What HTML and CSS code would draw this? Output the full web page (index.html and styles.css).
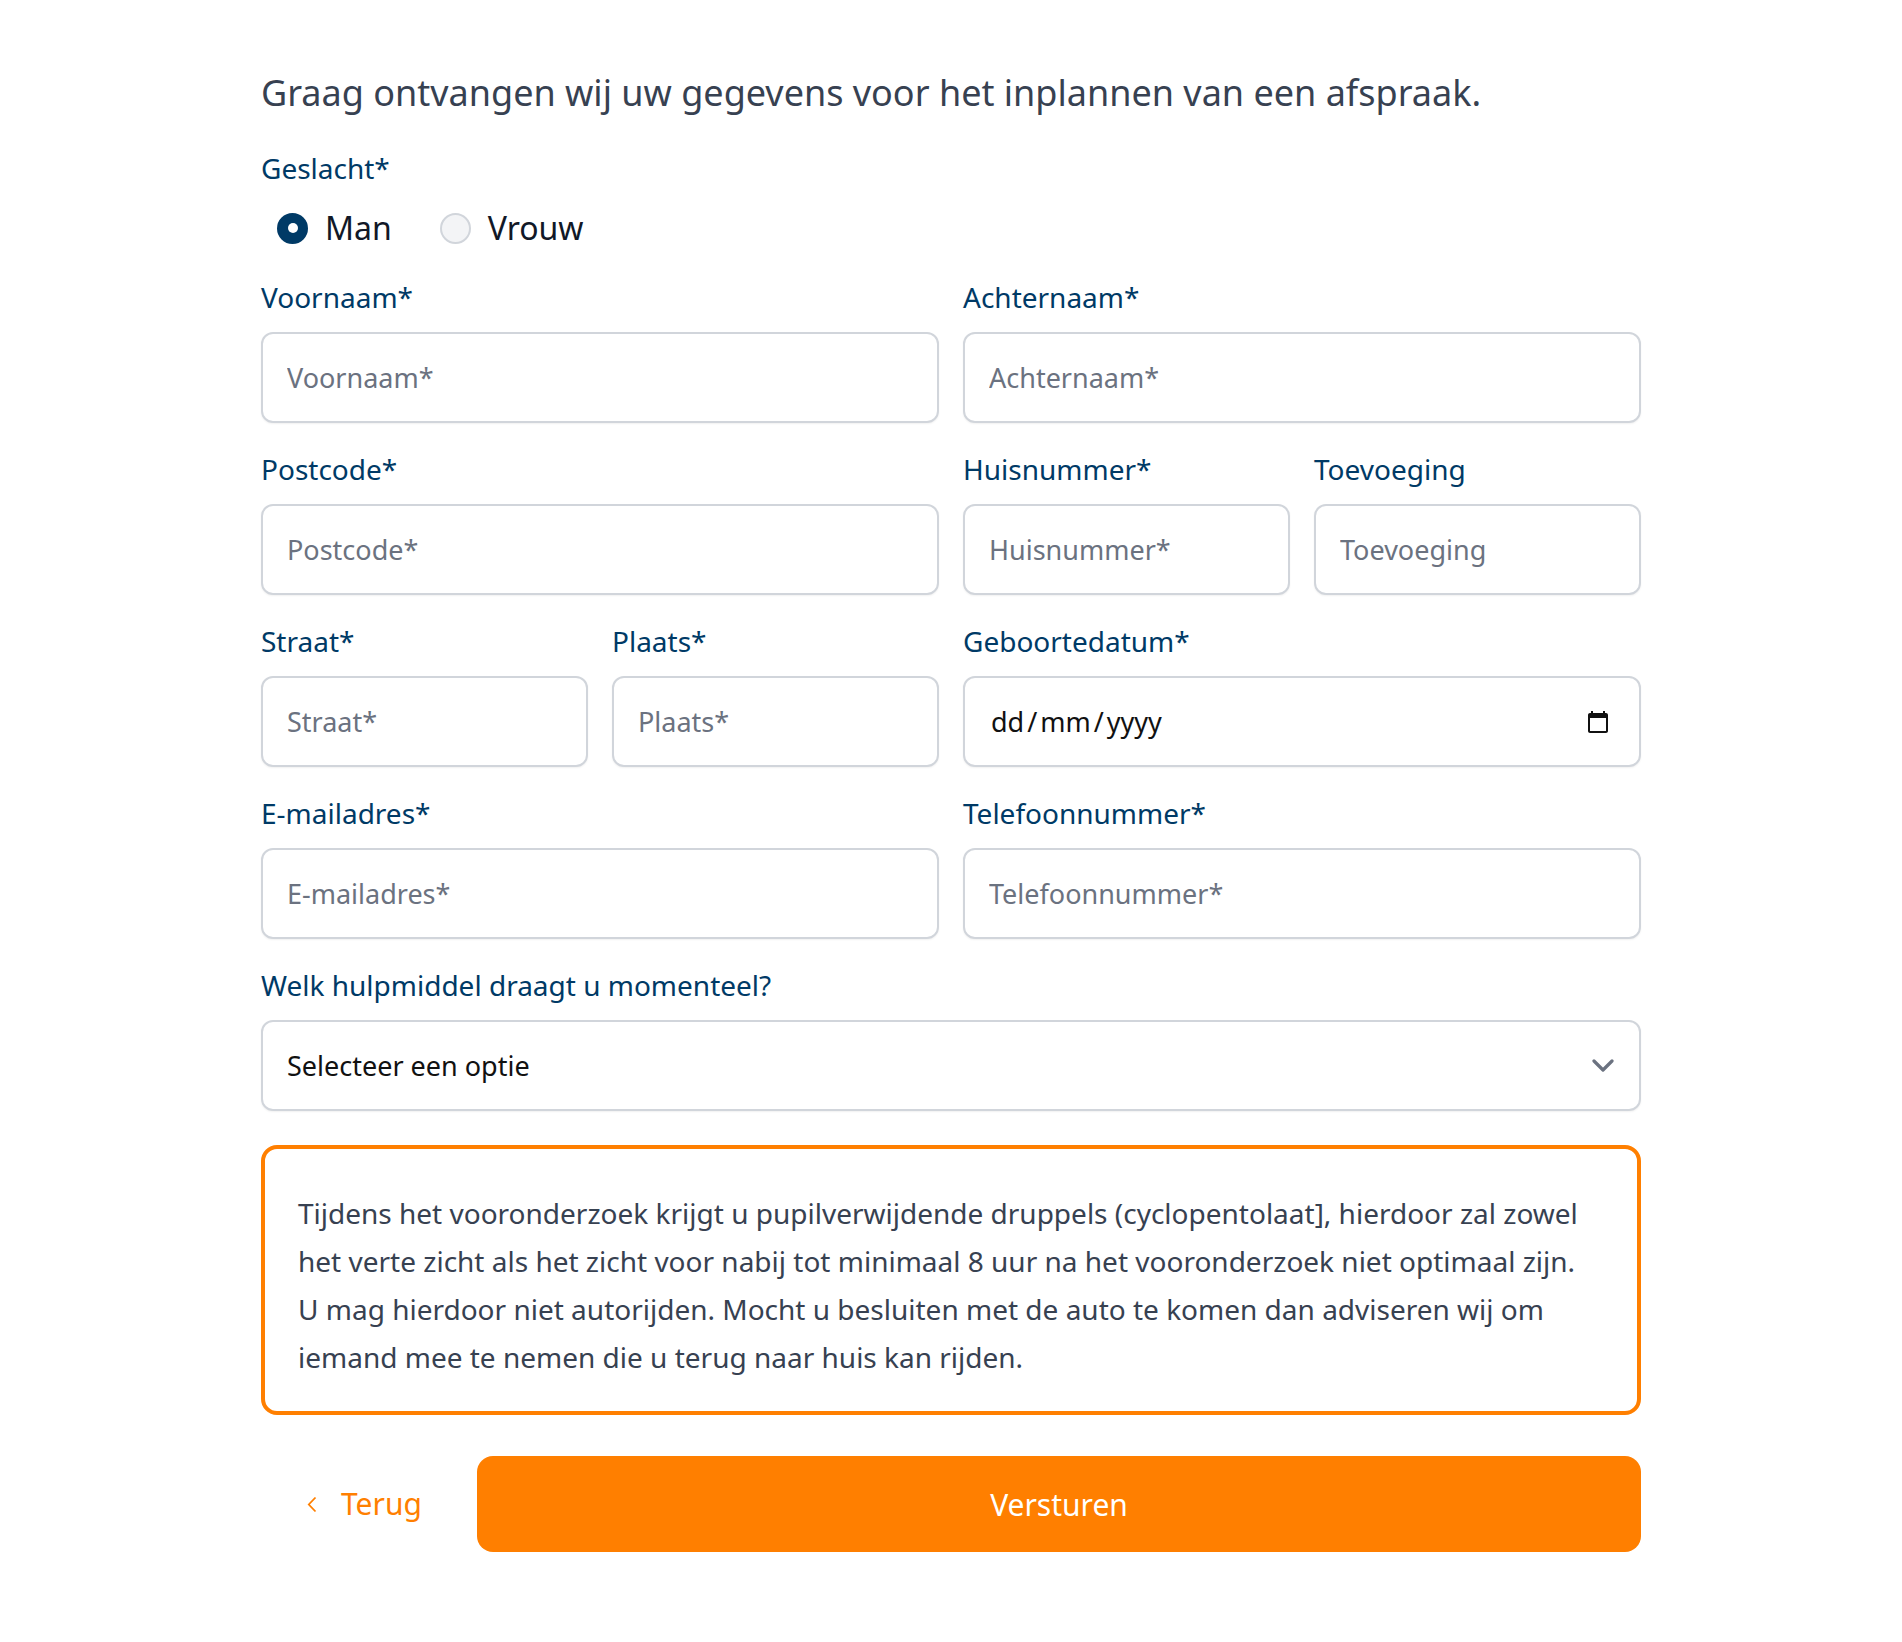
FILE: index.html
```html
<!DOCTYPE html>
<html lang="nl">
<head>
<meta charset="utf-8">
<title>Afspraak</title>
<link rel="stylesheet" href="styles.css">
</head>
<body>
<main class="page">
  <h1 class="intro">Graag ontvangen wij uw gegevens voor het inplannen van een afspraak.</h1>

  <div class="gender">
    <div class="label">Geslacht*</div>
    <div class="radios">
      <label class="radio"><span class="dot checked"></span><span>Man</span></label>
      <label class="radio"><span class="dot"></span><span>Vrouw</span></label>
    </div>
  </div>

  <div class="grid">
    <div class="field span2">
      <div class="label">Voornaam*</div>
      <input class="input" type="text" placeholder="Voornaam*">
    </div>
    <div class="field span2">
      <div class="label">Achternaam*</div>
      <input class="input" type="text" placeholder="Achternaam*">
    </div>

    <div class="field span2">
      <div class="label">Postcode*</div>
      <input class="input" type="text" placeholder="Postcode*">
    </div>
    <div class="field">
      <div class="label">Huisnummer*</div>
      <input class="input" type="text" placeholder="Huisnummer*">
    </div>
    <div class="field">
      <div class="label">Toevoeging</div>
      <input class="input" type="text" placeholder="Toevoeging">
    </div>

    <div class="field">
      <div class="label">Straat*</div>
      <input class="input" type="text" placeholder="Straat*">
    </div>
    <div class="field">
      <div class="label">Plaats*</div>
      <input class="input" type="text" placeholder="Plaats*">
    </div>
    <div class="field span2">
      <div class="label">Geboortedatum*</div>
      <div class="input date">
        <span class="date-text">dd<span class="sep">/</span>mm<span class="sep">/</span>yyyy</span>
        <svg class="cal" viewBox="0 0 24 24" width="24" height="24" aria-hidden="true"><path d="M20 3h-1V1h-2v2H7V1H5v2H4c-1.1 0-2 .9-2 2v16c0 1.1.9 2 2 2h16c1.1 0 2-.9 2-2V5c0-1.1-.9-2-2-2zm0 18H4V8h16v13z" fill="#111"/></svg>
      </div>
    </div>

    <div class="field span2">
      <div class="label">E-mailadres*</div>
      <input class="input" type="email" placeholder="E-mailadres*">
    </div>
    <div class="field span2">
      <div class="label">Telefoonnummer*</div>
      <input class="input" type="tel" placeholder="Telefoonnummer*">
    </div>

    <div class="field span4">
      <div class="label">Welk hulpmiddel draagt u momenteel?</div>
      <div class="input select">
        <span>Selecteer een optie</span>
        <svg class="chev" viewBox="0 0 22 13" width="22" height="13" aria-hidden="true"><path d="M2 2l9 9 9-9" fill="none" stroke="#6b7280" stroke-width="3.2" stroke-linecap="round" stroke-linejoin="round"/></svg>
      </div>
    </div>
  </div>

  <div class="notice">
    Tijdens het vooronderzoek krijgt u pupilverwijdende druppels (cyclopentolaat], hierdoor zal zowel<br>
    het verte zicht als het zicht voor nabij tot minimaal 8 uur na het vooronderzoek niet optimaal zijn.<br>
    U mag hierdoor niet autorijden. Mocht u besluiten met de auto te komen dan adviseren wij om<br>
    iemand mee te nemen die u terug naar huis kan rijden.
  </div>

  <div class="actions">
    <a class="back" href="#">
      <svg class="back-icon" viewBox="0 0 10 17" width="10" height="17" aria-hidden="true"><path d="M8.5 1.5L1.8 8.5l6.7 7" fill="none" stroke="#ff7f00" stroke-width="1.8"/></svg>
      <span>Terug</span>
    </a>
    <button class="submit" type="button">Versturen</button>
  </div>
</main>
</body>
</html>
```

FILE: styles.css
```css
* {
  box-sizing: border-box;
}

html, body {
  margin: 0;
  padding: 0;
  background: #ffffff;
}

body {
  font-family: "Noto Sans", "Open Sans", "Liberation Sans", sans-serif;
  color: #374151;
}

.page {
  width: 1380px;
  margin: 0 auto;
  padding: 69px 0 60px;
}

.intro {
  margin: 0;
  font-size: 36px;
  line-height: 48px;
  font-weight: 400;
  color: #374151;
}

.label {
  font-size: 28px;
  line-height: 36px;
  color: #003a66;
  white-space: nowrap;
}

.gender {
  margin-top: 33px;
}

.radios {
  display: flex;
  align-items: center;
  height: 40px;
  margin-top: 22px;
  padding-left: 16px;
  gap: 48px;
}

.radio {
  display: flex;
  align-items: center;
  gap: 17px;
  font-size: 32px;
  line-height: 40px;
  color: #111827;
}

.dot {
  width: 31px;
  height: 31px;
  border-radius: 50%;
  background: #f3f4f6;
  border: 2px solid #d1d5db;
  display: flex;
  align-items: center;
  justify-content: center;
}

.dot.checked {
  background: #003a66;
  border-color: #003a66;
}

.dot.checked::after {
  content: "";
  width: 10px;
  height: 10px;
  border-radius: 50%;
  background: #ffffff;
}

.grid {
  margin-top: 31px;
  display: grid;
  grid-template-columns: repeat(4, 1fr);
  column-gap: 24px;
  row-gap: 28px;
}

.field {
  display: flex;
  flex-direction: column;
  gap: 17px;
  min-width: 0;
}

.span2 {
  grid-column: span 2;
}

.span4 {
  grid-column: span 4;
}

.input {
  height: 91px;
  width: 100%;
  border: 2px solid #d1d5db;
  border-radius: 12px;
  background: #ffffff;
  box-shadow: 0 1px 2px rgba(0, 0, 0, 0.06);
  padding: 0 24px;
  font-family: inherit;
  font-size: 27px;
  color: #111827;
  outline: none;
}

.input::placeholder {
  color: #6b7280;
  opacity: 1;
}

.date,
.select {
  display: flex;
  align-items: center;
  justify-content: space-between;
}

.date {
  padding: 0 29px 0 26px;
}

.date-text {
  color: #111111;
  font-size: 27px;
}

.sep {
  padding: 0 3px;
}

.cal {
  width: 24px;
  height: 24px;
}

.select {
  padding: 0 25px 0 24px;
  color: #111111;
}

.notice {
  margin-top: 34px;
  border: 4px solid #ff7f00;
  border-radius: 16px;
  padding: 40px 33px 30px 33px;
  font-size: 28px;
  line-height: 48px;
  color: #374151;
  white-space: nowrap;
}

.actions {
  margin-top: 41px;
  display: flex;
  align-items: center;
  gap: 24px;
}

.back {
  width: 192px;
  flex: none;
  display: flex;
  align-items: center;
  gap: 24px;
  padding-left: 46px;
  color: #ff7f00;
  text-decoration: none;
  font-size: 30px;
  line-height: 40px;
}

.back-icon {
  flex: none;
}

.submit {
  flex: 1;
  height: 96px;
  border: none;
  border-radius: 16px;
  background: #ff7f00;
  color: #ffffff;
  font-family: inherit;
  font-size: 30px;
  cursor: pointer;
}
```
